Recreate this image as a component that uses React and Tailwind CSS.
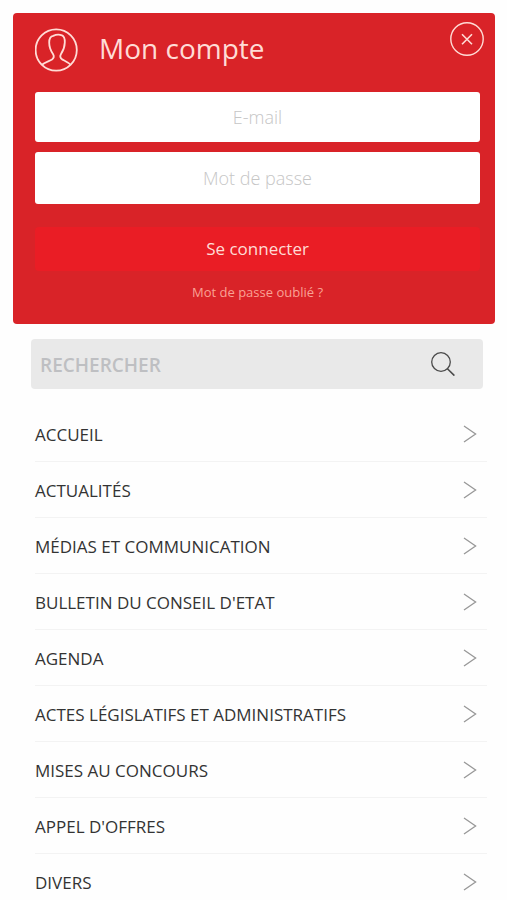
const menu = [
  "ACCUEIL",
  "ACTUALITÉS",
  "MÉDIAS ET COMMUNICATION",
  "BULLETIN DU CONSEIL D'ETAT",
  "AGENDA",
  "ACTES LÉGISLATIFS ET ADMINISTRATIFS",
  "MISES AU CONCOURS",
  "APPEL D'OFFRES",
  "DIVERS",
];

function AccountIcon() {
  return (
    <svg className="size-11 shrink-0" viewBox="0 0 44 44" fill="none" stroke="currentColor" strokeWidth="1.8" strokeLinejoin="round" aria-hidden="true">
      <circle cx="21.2" cy="22" r="20.6" />
      <path d="M7 36.8 C9.5 34.6 14.5 33 17 31.4 C19 30 19.2 28 18 26 C15.6 22.5 14.2 19 14.2 14.5 C14.2 10.5 15.2 8.4 18.2 7.9 C20.5 6.8 24.5 6.4 27 7.4 C29.5 8.4 29.9 11 29.8 14.5 C29.7 19 28.3 22.5 26 26 C24.8 28 25.2 30 27.2 31.4 C30 33 33.5 34.6 35.8 36.8" />
    </svg>
  );
}

function CloseIcon() {
  return (
    <svg className="size-9" viewBox="0 0 36 36" fill="none" stroke="currentColor" aria-hidden="true">
      <circle cx="18" cy="18" r="16.2" strokeWidth="1.4" />
      <path d="M13 13.2 L23 23.2 M23 13.2 L13 23.2" strokeWidth="1.6" />
    </svg>
  );
}

function SearchIcon() {
  return (
    <svg className="size-6" viewBox="0 0 24 24" fill="none" stroke="currentColor" aria-hidden="true">
      <circle cx="10" cy="10" r="9.3" strokeWidth="1.3" />
      <path d="M16.4 16.8 L23.4 23.6" strokeWidth="1.6" />
    </svg>
  );
}

function Chevron() {
  return (
    <svg className="h-[18px] w-3.5 shrink-0 text-[#989898]" viewBox="0 0 14 18" fill="none" stroke="currentColor" strokeWidth="1.3" aria-hidden="true">
      <path d="M1 1 L12.6 9 L1 17" />
    </svg>
  );
}

export default function App() {
  return (
    <main className="h-screen overflow-hidden bg-[#fefefe] pt-[13px] font-['Open_Sans','Noto_Sans',sans-serif]">
      <section className="mr-3 ml-[13px] h-[311px] rounded bg-[#d92328] pr-[15px] pl-[22px]">
        <header className="flex h-[79px] items-start justify-between text-[#ffdcd6]">
          <div className="flex items-start gap-5 pt-[15px]">
            <AccountIcon />
            <h1 className="text-[28px] leading-10 font-normal">Mon compte</h1>
          </div>
          <button type="button" aria-label="Fermer" className="-mr-[5px] pt-2">
            <CloseIcon />
          </button>
        </header>
        <form onSubmit={(e) => e.preventDefault()}>
          <input type="email" aria-label="E-mail" placeholder="E-mail" className="block h-[50px] w-full rounded-[3px] bg-white px-3 text-center text-lg font-light text-gray-700 outline-none placeholder:text-[#c6c6c6]" />
          <input type="password" aria-label="Mot de passe" placeholder="Mot de passe" className="mt-[10px] block h-[52px] w-full rounded-[3px] bg-white px-3 text-center text-lg font-light text-gray-700 outline-none placeholder:text-[#c6c6c6]" />
          <button type="submit" className="mt-[23px] block h-11 w-full rounded-sm bg-[#ea1d25] text-[17px] text-[#ffdcd6]">Se connecter</button>
        </form>
        <p className="mt-[9px] text-center text-[13px] leading-6">
          <a href="#oublie" className="text-[#f9a194]">Mot de passe oublié ?</a>
        </p>
      </section>

      <form role="search" onSubmit={(e) => e.preventDefault()} className="mr-6 ml-[31px] mt-[15px] flex h-[50px] items-center rounded bg-[#e9e9e9] pr-7 pl-[9px]">
        <input type="search" aria-label="Rechercher" placeholder="RECHERCHER" className="min-w-0 flex-1 bg-transparent pt-0.5 text-[19px] font-semibold text-gray-600 outline-none placeholder:text-[#bebfc2]" />
        <button type="submit" aria-label="Lancer la recherche" className="text-[#4a4a4a]">
          <SearchIcon />
        </button>
      </form>

      <nav aria-label="Menu principal" className="mr-5 ml-[35px] mt-[17px]">
        <ul>
          {menu.map((label) => (
            <li key={label} className="border-b border-[#f3f3f3]">
              <a href="#menu" className="flex h-[55px] items-center justify-between pr-2.5 text-[17px] text-[#333]">
                <span className="pt-0.5">{label}</span>
                <Chevron />
              </a>
            </li>
          ))}
        </ul>
      </nav>
    </main>
  );
}
